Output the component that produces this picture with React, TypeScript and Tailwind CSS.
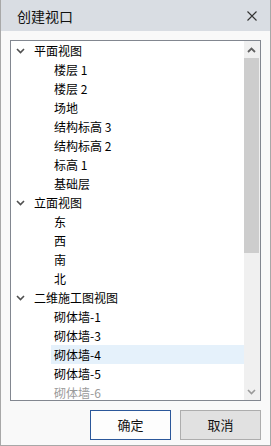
import React from "react";

const font = { fontFamily: '"Noto Sans CJK SC", "Microsoft YaHei", sans-serif' };

type Row = { label: string; level: 0 | 1; selected?: boolean; faded?: boolean };

const rows: Row[] = [
  { label: "平面视图", level: 0 },
  { label: "楼层 1", level: 1 },
  { label: "楼层 2", level: 1 },
  { label: "场地", level: 1 },
  { label: "结构标高 3", level: 1 },
  { label: "结构标高 2", level: 1 },
  { label: "标高 1", level: 1 },
  { label: "基础层", level: 1 },
  { label: "立面视图", level: 0 },
  { label: "东", level: 1 },
  { label: "西", level: 1 },
  { label: "南", level: 1 },
  { label: "北", level: 1 },
  { label: "二维施工图视图", level: 0 },
  { label: "砌体墙-1", level: 1 },
  { label: "砌体墙-3", level: 1 },
  { label: "砌体墙-4", level: 1, selected: true },
  { label: "砌体墙-5", level: 1 },
  { label: "砌体墙-6", level: 1, faded: true },
];

function Chevron() {
  return (
    <svg width="9" height="6" viewBox="0 0 9 6" className="shrink-0">
      <path d="M1 1 L4.5 4.5 L8 1" fill="none" stroke="#505050" strokeWidth="1.6" />
    </svg>
  );
}

export default function App() {
  return (
    <div
      className="w-[271px] h-[446px] bg-[#f9f9f9] border-x border-b border-[#a8a8a8] flex flex-col overflow-hidden"
      style={font}
    >
      <div className="h-[31px] shrink-0 bg-[#d9dde3] flex items-center justify-between pl-4 pr-[13px]">
        <span className="text-[14px] text-[#111] leading-none">创建视口</span>
        <svg width="10" height="10" viewBox="0 0 10 10">
          <path d="M0.5 0.5 L9.5 9.5 M9.5 0.5 L0.5 9.5" stroke="#333" strokeWidth="1.1" />
        </svg>
      </div>

      <div className="ml-[9px] mt-[9px] w-[251px] h-[361px] shrink-0 border border-[#828790] bg-white flex overflow-hidden">
        <div className="flex-1 flex flex-col overflow-hidden">
          {rows.map((r, i) =>
            r.level === 0 ? (
              <div key={i} className="h-[19px] shrink-0 flex items-center pl-[5px]">
                <Chevron />
                <span className="ml-[9px] text-[12px] leading-[19px] text-black">{r.label}</span>
              </div>
            ) : (
              <div
                key={i}
                className={
                  "h-[19px] shrink-0 ml-[40px] pl-[3px] flex items-center " +
                  (r.selected ? "bg-[#e5f1fb]" : "")
                }
              >
                <span
                  className={
                    "text-[12px] leading-[19px] " + (r.faded ? "text-[#9a9a9a]" : "text-black")
                  }
                >
                  {r.label}
                </span>
              </div>
            )
          )}
        </div>
        <div className="w-[16px] shrink-0 bg-[#f0f0f0] flex flex-col pr-px">
          <div className="h-[17px] shrink-0 flex items-center justify-center">
            <svg width="9" height="6" viewBox="0 0 9 6">
              <path d="M1 5 L4.5 1.5 L8 5" fill="none" stroke="#606060" strokeWidth="1.8" />
            </svg>
          </div>
          <div className="h-[195px] shrink-0 bg-[#cdcdcd]" />
          <div className="flex-1" />
          <div className="h-[17px] shrink-0 flex items-center justify-center">
            <svg width="9" height="6" viewBox="0 0 9 6">
              <path d="M1 1 L4.5 4.5 L8 1" fill="none" stroke="#9a9a9a" strokeWidth="1.6" />
            </svg>
          </div>
        </div>
      </div>

      <div className="mt-[9px] flex justify-end gap-[9px] pr-[9px]">
        <button className="w-[81px] h-[30px] border border-[#2b579a] bg-[#fdfdfd] text-[13px] text-[#111]">
          确定
        </button>
        <button className="w-[81px] h-[30px] border border-[#adadad] bg-[#e1e1e1] text-[13px] text-[#111]">
          取消
        </button>
      </div>
    </div>
  );
}
